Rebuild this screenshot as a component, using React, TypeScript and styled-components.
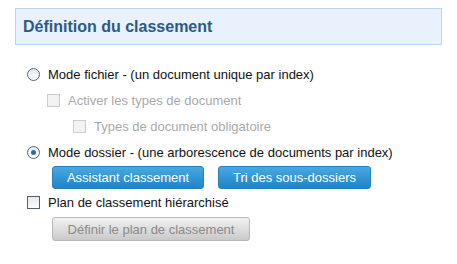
import React from 'react';
import styled, { createGlobalStyle } from 'styled-components';

const GlobalStyle = createGlobalStyle`
  body {
    margin: 0;
    background: #ffffff;
    font-family: "Liberation Sans", Arial, sans-serif;
  }
`;

const Page = styled.div`
  width: 457px;
  height: 264px;
  padding: 8px 0 0 15px;
  box-sizing: border-box;
`;

const Header = styled.div`
  width: 427px;
  height: 37px;
  box-sizing: border-box;
  border: 1px solid #b8d4f6;
  background: #e8f1fc;
  display: flex;
  align-items: center;
  padding-left: 7px;
`;

const Title = styled.h2`
  margin: 0;
  font-size: 16px;
  font-weight: bold;
  color: #2d5986;
`;

const Body = styled.div`
  margin-top: 16px;
  display: flex;
  flex-direction: column;
`;

const Row = styled.label<{ $indent: number; $disabled?: boolean }>`
  height: 26px;
  display: flex;
  align-items: center;
  padding-left: ${(p) => p.$indent}px;
  font-size: 13px;
  color: ${(p) => (p.$disabled ? '#a9a9a9' : '#111111')};
  gap: 8px;
`;

const Radio = styled.span<{ $checked?: boolean }>`
  width: 13px;
  height: 13px;
  box-sizing: border-box;
  border-radius: 50%;
  border: 1px solid #56677c;
  background: linear-gradient(#e4e8ee, #ffffff);
  display: flex;
  align-items: center;
  justify-content: center;
  &::after {
    content: '';
    width: 5px;
    height: 5px;
    border-radius: 50%;
    background: ${(p) => (p.$checked ? '#2e6aa8' : 'transparent')};
  }
`;

const Check = styled.span<{ $disabled?: boolean }>`
  width: 13px;
  height: 13px;
  box-sizing: border-box;
  border: 1px solid ${(p) => (p.$disabled ? '#c9cdd3' : '#4e5f73')};
  background: ${(p) =>
    p.$disabled ? '#f3f3f3' : 'linear-gradient(#e6e9ee, #fbfbfb)'};
`;

const ButtonRow = styled.div`
  display: flex;
  gap: 14px;
  padding-left: 37px;
  margin-top: 1px;
`;

const BlueButton = styled.button<{ $w: number }>`
  width: ${(p) => p.$w}px;
  height: 23px;
  border: 1px solid #2a7fbf;
  border-radius: 3px;
  background: linear-gradient(#47a9e3, #1f84c9);
  color: #ffffff;
  font-family: "Liberation Sans", Arial, sans-serif;
  font-size: 13px;
  padding: 0;
`;

const GreyButton = styled.button`
  width: 198px;
  height: 24px;
  margin: 2px 0 0 37px;
  border: 1px solid #b8b8b8;
  border-radius: 3px;
  background: linear-gradient(#f2f2f2, #c9c9c9);
  color: #8a8a8a;
  font-family: "Liberation Sans", Arial, sans-serif;
  font-size: 13px;
  padding: 0;
`;

export default function App() {
  return (
    <>
      <GlobalStyle />
      <Page>
        <Header>
          <Title>Définition du classement</Title>
        </Header>
        <Body>
          <Row $indent={12}>
            <Radio />
            Mode fichier - (un document unique par index)
          </Row>
          <Row $indent={32} $disabled>
            <Check $disabled />
            Activer les types de document
          </Row>
          <Row $indent={58} $disabled>
            <Check $disabled />
            Types de document obligatoire
          </Row>
          <Row $indent={12}>
            <Radio $checked />
            Mode dossier - (une arborescence de documents par index)
          </Row>
          <ButtonRow>
            <BlueButton $w={152}>Assistant classement</BlueButton>
            <BlueButton $w={153}>Tri des sous-dossiers</BlueButton>
          </ButtonRow>
          <Row $indent={12}>
            <Check />
            Plan de classement hiérarchisé
          </Row>
          <GreyButton>Définir le plan de classement</GreyButton>
        </Body>
      </Page>
    </>
  );
}
